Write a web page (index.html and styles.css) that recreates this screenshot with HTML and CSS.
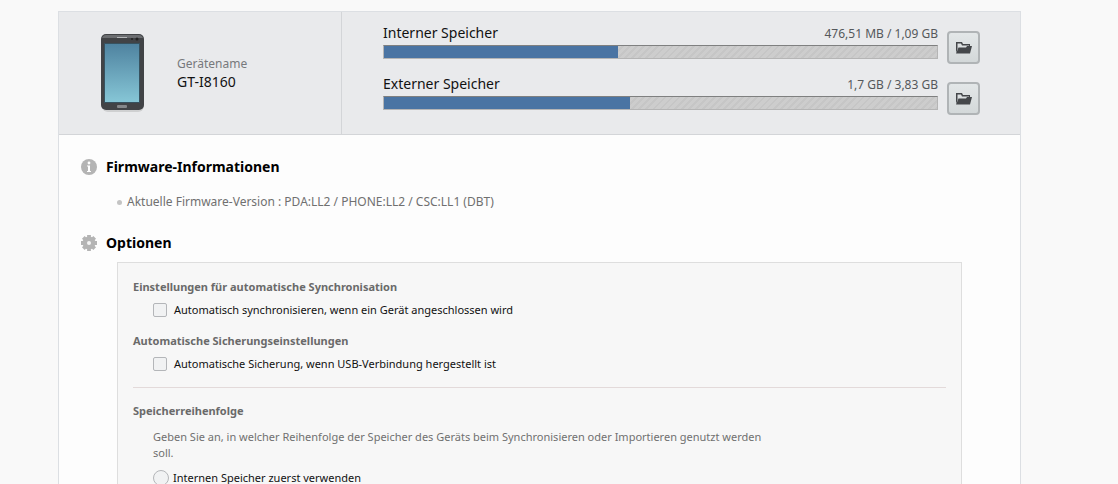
FILE: index.html
```html
<!DOCTYPE html>
<html lang="de">
<head>
    <meta charset="UTF-8">
    <meta name="viewport" content="width=device-width, initial-scale=1.0">
    <title>GT-I8160</title>
    <link rel="stylesheet" href="styles.css">
</head>
<body>
    <div class="panel">
        <header class="device">
            <div class="device-info">
                <svg class="phone" width="48" height="80" viewBox="0 0 48 80" aria-hidden="true">
                    <defs>
                        <linearGradient id="screen" x1="0" y1="0" x2="0" y2="1">
                            <stop offset="0" stop-color="#4f83a0"/>
                            <stop offset="1" stop-color="#86c6d6"/>
                        </linearGradient>
                    </defs>
                    <rect x="3" y="3" width="42" height="76" rx="6" fill="#cfd0d1"/>
                    <rect x="2" y="1" width="43" height="76" rx="5" fill="#414346"/>
                    <path d="M7 2h33c2 0 3 1 4 3H3c1-2 2-3 4-3z" fill="#6b6d70"/>
                    <rect x="18" y="4" width="10" height="1" fill="#b5b7b9"/>
                    <circle cx="33" cy="6" r="1" fill="#222"/>
                    <circle cx="38" cy="6" r="1.5" fill="#222"/>
                    <rect x="5" y="10" width="36" height="60" fill="#37525f"/>
                    <rect x="6" y="11" width="34" height="58" fill="url(#screen)"/>
                    <rect x="18" y="72" width="10" height="3" rx="1" fill="#85878a"/>
                </svg>
                <div>
                    <div class="device-label">Gerätename</div>
                    <div class="device-name">GT-I8160</div>
                </div>
            </div>
            <div class="storage-list">
                <div class="storage">
                    <div class="storage-main">
                        <div class="storage-text">
                            <span class="storage-name">Interner Speicher</span>
                            <span class="storage-size">476,51 MB / 1,09 GB</span>
                        </div>
                        <div class="bar"><div class="bar-fill" style="width: 42.4%"></div></div>
                    </div>
                    <button type="button" class="folder-button" aria-label="Interner Speicher">
                        <svg width="18" height="14" viewBox="0 0 18 14" aria-hidden="true">
                            <path d="M1 12V1h6l1 2h7v3h-1V4.500H7L6 2.500H2.500V8z" fill="#44474a"/>
                            <path d="M1 12.500L3.500 6.500H11l1-1.500h5L15 12.500z" fill="#44474a"/>
                        </svg>
                    </button>
                </div>
                <div class="storage">
                    <div class="storage-main">
                        <div class="storage-text">
                            <span class="storage-name">Externer Speicher</span>
                            <span class="storage-size">1,7 GB / 3,83 GB</span>
                        </div>
                        <div class="bar"><div class="bar-fill" style="width: 44.5%"></div></div>
                    </div>
                    <button type="button" class="folder-button" aria-label="Externer Speicher">
                        <svg width="18" height="14" viewBox="0 0 18 14" aria-hidden="true">
                            <path d="M1 12V1h6l1 2h7v3h-1V4.500H7L6 2.500H2.500V8z" fill="#44474a"/>
                            <path d="M1 12.500L3.500 6.500H11l1-1.500h5L15 12.500z" fill="#44474a"/>
                        </svg>
                    </button>
                </div>
            </div>
        </header>

        <main>
            <h2>
                <svg width="18" height="18" viewBox="0 0 18 18" aria-hidden="true">
                    <circle cx="9" cy="9" r="8" fill="#b4b4b4"/>
                    <circle cx="9" cy="5" r="1.4" fill="#fff"/>
                    <path d="M7 7.500h3V13h1v1H7v-1h1V8.500H7z" fill="#fff"/>
                </svg>
                Firmware-Informationen
            </h2>
            <ul class="firmware">
                <li>Aktuelle Firmware-Version : PDA:LL2 / PHONE:LL2 / CSC:LL1 (DBT)</li>
            </ul>

            <h2>
                <svg width="18" height="18" viewBox="0 0 18 18" aria-hidden="true">
                    <circle cx="9" cy="9" r="6.500" fill="#b4b4b4"/>
                    <path d="M9 1v16M1 9h16M3.300 3.300l11.400 11.400M14.700 3.300L3.300 14.700" stroke="#b4b4b4" stroke-width="3.800"/>
                    <circle cx="9" cy="9" r="2" fill="#f4f4f4"/>
                </svg>
                Optionen
            </h2>
            <form class="options">
                <h3>Einstellungen für automatische Synchronisation</h3>
                <label class="check"><input type="checkbox">Automatisch synchronisieren, wenn ein Gerät angeschlossen wird</label>
                <h3>Automatische Sicherungseinstellungen</h3>
                <label class="check"><input type="checkbox">Automatische Sicherung, wenn USB-Verbindung hergestellt ist</label>
                <hr>
                <h3>Speicherreihenfolge</h3>
                <p>Geben Sie an, in welcher Reihenfolge der Speicher des Geräts beim Synchronisieren oder Importieren genutzt werden soll.</p>
                <label class="radio"><input type="radio" name="storage">Internen Speicher zuerst verwenden</label>
            </form>
        </main>
    </div>
</body>
</html>
```
FILE: styles.css
```css
* {
    box-sizing: border-box;
}
body {
    font-family: "Noto Sans", "Open Sans", sans-serif;
    font-size: 12px;
    line-height: 16px;
    margin: 0;
    height: 100vh;
    overflow: hidden;
    background-color: #f9f9f9;
    color: #111;
}
.panel {
    margin: 11px 97px 0 58px;
    border: 1px solid #dcdfe3;
    background-color: #fdfdfd;
}
.device {
    display: flex;
    background-color: #e9eaec;
    border-bottom: 1px solid #d3d5d8;
}
.device-info {
    display: flex;
    align-items: center;
    gap: 30px;
    width: 283px;
    padding-left: 40px;
    border-right: 1px solid #d3d5d8;
}
.device-label {
    color: #77797c;
    line-height: 18px;
}
.device-name {
    font-size: 14px;
    line-height: 18px;
}
.storage-list {
    flex: 1;
    display: flex;
    flex-direction: column;
    gap: 10px;
    padding: 11px 40px 19px 41px;
}
.storage {
    display: flex;
    align-items: flex-end;
    gap: 9px;
}
.storage-main {
    flex: 1;
    padding-bottom: 5px;
}
.storage-text {
    display: flex;
    justify-content: space-between;
    align-items: baseline;
    line-height: 20px;
}
.storage-name {
    font-size: 14px;
}
.storage-size {
    color: #55585b;
}
.bar {
    height: 14px;
    margin-top: 1px;
    border: 1px solid #b5b5b5;
    border-top-color: #7f8080;
    background: repeating-linear-gradient(135deg, #cdcdcd 0, #cdcdcd 3px, #c6c6c6 3px, #c6c6c6 5px);
}
.bar-fill {
    height: 100%;
    background-color: #4a74a3;
}
.folder-button {
    display: flex;
    align-items: center;
    justify-content: center;
    width: 33px;
    height: 33px;
    padding: 0;
    border: 2px solid #b0b4b6;
    border-radius: 4px;
    background: linear-gradient(#e3e7e8, #d3d8d9);
}
main {
    padding: 20px 58px 0 21px;
}
h2 {
    display: flex;
    align-items: center;
    gap: 8px;
    margin: 0;
    font-size: 14px;
    line-height: 24px;
    color: #000;
}
.firmware {
    margin: 14px 0 20px 37px;
    padding: 0;
    list-style: none;
    line-height: 18px;
    color: #707070;
}
.firmware li {
    display: flex;
    align-items: center;
    gap: 5px;
}
.firmware li::before {
    content: "";
    width: 5px;
    height: 5px;
    border-radius: 50%;
    background-color: #c4c4c4;
}
.options {
    margin: 7px 0 0 37px;
    padding: 16px 15px;
    border: 1px solid #dedede;
    background-color: #f7f7f7;
    font-size: 11px;
}
h3 {
    margin: 0;
    font-size: 11px;
    line-height: 16px;
    color: #6a6a6a;
}
.check,
.radio {
    display: flex;
    align-items: center;
    height: 30px;
    padding-left: 20px;
}
.check {
    gap: 7px;
    margin-bottom: 8px;
}
.radio {
    gap: 4px;
}
input {
    appearance: none;
    margin: 0;
    width: 14px;
    height: 14px;
    border: 1px solid #b4b6b9;
    border-radius: 2px;
    background-color: #f1f2f3;
}
input[type="radio"] {
    width: 16px;
    height: 16px;
    border-radius: 50%;
}
hr {
    margin: 0 0 15px;
    border: 0;
    border-top: 1px solid #e3dada;
}
p {
    max-width: 645px;
    margin: 10px 0 2px;
    padding-left: 20px;
    color: #707070;
}
```
